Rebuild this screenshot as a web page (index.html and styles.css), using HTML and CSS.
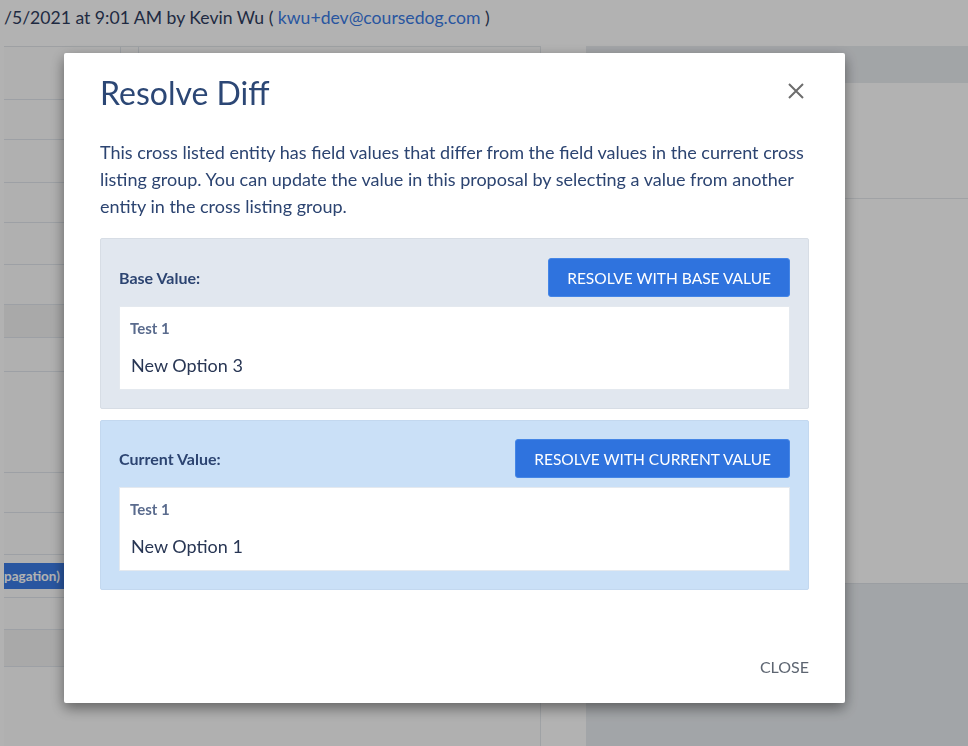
FILE: index.html
```html
<!DOCTYPE html>
<html lang="en">
<head>
<meta charset="utf-8">
<title>Resolve Diff</title>
<link rel="stylesheet" href="styles.css">
</head>
<body>
<div class="page">
  <div class="topbar">/5/2021 at 9:01 AM by Kevin Wu ( <span class="link">kwu+dev@coursedog.com</span> )</div>
  <div class="content">
    <div class="edge"></div>
    <div class="main">
      <div class="row head"><span class="col c1"></span><span class="col c2"></span><span class="col c3"></span></div>
      <div class="row r54"></div>
      <div class="row r40"></div>
      <div class="row r43"></div>
      <div class="row r40"></div>
      <div class="row r42"></div>
      <div class="row r40"></div>
      <div class="row r33 shade"></div>
      <div class="row r34"></div>
      <div class="row r101"></div>
      <div class="row r40"></div>
      <div class="row r42"></div>
      <div class="row r43 pill-row"><span class="pill">pagation)</span></div>
      <div class="row r32"></div>
      <div class="row r37 shade"></div>
    </div>
    <div class="divider"></div>
    <div class="side">
      <div class="side-head"></div>
      <div class="side-body">
        <div class="side-sec"></div>
      </div>
      <div class="side-foot"></div>
    </div>
  </div>
</div>
<div class="overlay"></div>
<div class="modal" role="dialog" aria-labelledby="modal-title">
  <div class="modal-header">
    <h2 class="modal-title" id="modal-title">Resolve Diff</h2>
    <button class="icon-close" aria-label="Close">
      <svg width="16" height="16" viewBox="0 0 16 16"><path d="M1 1 L15 15 M15 1 L1 15" stroke="#6d6d6d" stroke-width="2" fill="none"/></svg>
    </button>
  </div>
  <p class="modal-text">This cross listed entity has field values that differ from the field values in the current cross listing group. You can update the value in this proposal by selecting a value from another entity in the cross listing group.</p>
  <div class="diff-box base">
    <div class="diff-head">
      <span class="diff-label">Base Value:</span>
      <button class="btn-primary">RESOLVE WITH BASE VALUE</button>
    </div>
    <div class="value-card">
      <div class="value-label">Test 1</div>
      <div class="value-text">New Option 3</div>
    </div>
  </div>
  <div class="diff-box current">
    <div class="diff-head">
      <span class="diff-label">Current Value:</span>
      <button class="btn-primary">RESOLVE WITH CURRENT VALUE</button>
    </div>
    <div class="value-card">
      <div class="value-label">Test 1</div>
      <div class="value-text">New Option 1</div>
    </div>
  </div>
  <div class="modal-footer">
    <button class="btn-text">CLOSE</button>
  </div>
</div>
</body>
</html>
```

FILE: styles.css
```css
html, body {
  margin: 0;
  padding: 0;
  background: #ffffff;
  font-family: "Lato", "Liberation Sans", sans-serif;
}

.page {
  width: 968px;
  height: 746px;
  overflow: hidden;
}

.topbar {
  height: 46px;
  box-sizing: border-box;
  padding: 6px 0 0 4px;
  font-size: 17.6px;
  line-height: 24px;
  color: #2f3d5e;
  white-space: nowrap;
}

.link {
  color: #3a7be6;
}

.content {
  display: flex;
  height: 700px;
}

.edge {
  width: 4px;
  background: #ffffff;
}

.main {
  width: 536px;
  background: #fcfcfc;
  border-top: 1px solid #e2e6ea;
}

.row {
  border-bottom: 1px solid #e1e6ec;
  box-sizing: border-box;
}

.head {
  height: 11px;
  display: flex;
  border-bottom: none;
}

.col {
  display: block;
}

.c1 { width: 116px; border-right: 1px solid #e1e6ec; }
.c2 { width: 17px; border-right: 1px solid #e1e6ec; }
.c3 { flex: 1; }

.r54 { height: 42px; }
.r40 { height: 40px; }
.r43 { height: 43px; }
.r42 { height: 42px; }
.r33 { height: 33px; }
.r34 { height: 34px; }
.r101 { height: 101px; }
.r32 { height: 32px; }
.r37 { height: 37px; }

.shade {
  background: #f3f3f3;
}

.pill-row {
  padding-top: 8px;
}

.pill {
  display: inline-block;
  background: #3c7ce6;
  color: #ffffff;
  font-size: 13.5px;
  font-weight: 700;
  line-height: 26px;
  padding: 0 40px 0 0;
}

.divider {
  width: 45px;
  background: #ffffff;
  border-left: 1px solid #e4e8ec;
}

.side {
  flex: 1;
  display: flex;
  flex-direction: column;
}

.side-head {
  height: 37px;
  background: #e9ecf0;
}

.side-body {
  height: 500px;
  background: #ffffff;
}

.side-sec {
  height: 115px;
  border-bottom: 1px solid #e6e9ed;
}

.side-foot {
  flex: 1;
  background: #e9edf1;
  border-top: 1px solid #dfe3e8;
}

.overlay {
  position: fixed;
  inset: 0;
  background: rgba(0, 0, 0, 0.3);
}

.modal {
  position: fixed;
  left: 64px;
  top: 53px;
  width: 781px;
  height: 650px;
  box-sizing: border-box;
  background: #ffffff;
  border-radius: 2px;
  box-shadow: 0 5px 14px rgba(0, 0, 0, 0.45);
  padding: 20px 36px 18px;
  display: flex;
  flex-direction: column;
}

.modal-header {
  display: flex;
  justify-content: space-between;
  align-items: center;
}

.modal-title {
  margin: 0;
  font-size: 32px;
  line-height: 40px;
  font-weight: 400;
  color: #2c4775;
}

.icon-close {
  border: none;
  background: none;
  padding: 0;
  margin: -4px 5px 0 0;
  width: 16px;
  height: 16px;
  display: flex;
}

.modal-text {
  margin: 26px 0 0;
  font-size: 18px;
  line-height: 27px;
  color: #2c4471;
}

.diff-box {
  border: 1px solid #d7dde5;
  border-radius: 2px;
  padding: 19px 18px 18px;
  margin-top: 18px;
}

.diff-box.base {
  background: #e1e7ef;
}

.diff-box.current {
  background: #cae0f7;
  border-color: #c3d8ef;
  margin-top: 11px;
  padding-top: 18px;
}

.diff-head {
  display: flex;
  justify-content: space-between;
  align-items: center;
  margin-bottom: 9px;
}

.diff-label {
  font-size: 16px;
  font-weight: 700;
  color: #2c4471;
}

.btn-primary {
  height: 39px;
  box-sizing: border-box;
  padding: 0 18px;
  border: 1px solid #4586e6;
  border-radius: 3px;
  background: #2f73de;
  color: #ffffff;
  font-family: "Lato", "Liberation Sans", sans-serif;
  font-size: 15.5px;
  line-height: 20px;
}

.value-card {
  background: #ffffff;
  border: 1px solid #e4e9ef;
  padding: 11px 10px 12px;
}

.value-label {
  font-size: 15px;
  line-height: 20px;
  font-weight: 700;
  color: #5a6b8d;
}

.value-text {
  margin-top: 15px;
  padding-left: 1px;
  font-size: 18px;
  line-height: 24px;
  color: #283654;
}

.modal-footer {
  margin-top: auto;
  display: flex;
  justify-content: flex-end;
}

.btn-text {
  border: none;
  background: none;
  padding: 8px 0;
  font-family: "Lato", "Liberation Sans", sans-serif;
  font-size: 16px;
  line-height: 20px;
  color: #5d6571;
}
```
